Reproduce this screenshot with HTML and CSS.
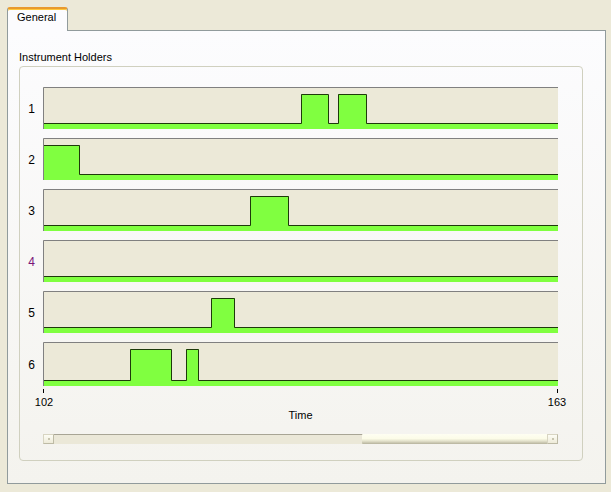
FILE: index.html
```html
<!DOCTYPE html>
<html>
<head>
<meta charset="utf-8">
<link rel="stylesheet" href="styles.css">
</head>
<body>
<div class="window">
  <div class="tabs"><div class="tab">General</div></div>
  <div class="panel">
    <div class="group-label">Instrument Holders</div>
    <div class="group">
      <div class="rows">
        <div class="row">
          <div class="row-label">1</div>
          <svg class="plot" width="515" height="42" viewBox="0 0 515 42">
            <rect class="bg" width="515" height="42"/>
            <path class="area" d="M1,36 H258 V7 H285 V36 H295 V7 H323 V36 H515 V42 H1 Z"/>
            <path class="step" d="M1,36.5 H258.5 V7.5 H285.5 V36.5 H295.5 V7.5 H323.5 V36.5 H515"/>
            <path class="frame" d="M0.5,42 V0.5 H515"/>
          </svg>
        </div>
        <div class="row">
          <div class="row-label">2</div>
          <svg class="plot" width="515" height="42" viewBox="0 0 515 42">
            <rect class="bg" width="515" height="42"/>
            <path class="area" d="M1,7 H37 V36 H515 V42 H1 Z"/>
            <path class="step" d="M1,7.5 H36.5 V36.5 H515"/>
            <path class="frame" d="M0.5,42 V0.5 H515"/>
          </svg>
        </div>
        <div class="row">
          <div class="row-label">3</div>
          <svg class="plot" width="515" height="42" viewBox="0 0 515 42">
            <rect class="bg" width="515" height="42"/>
            <path class="area" d="M1,36 H207 V7 H246 V36 H515 V42 H1 Z"/>
            <path class="step" d="M1,36.5 H207.5 V7.5 H245.5 V36.5 H515"/>
            <path class="frame" d="M0.5,42 V0.5 H515"/>
          </svg>
        </div>
        <div class="row">
          <div class="row-label purple">4</div>
          <svg class="plot" width="515" height="42" viewBox="0 0 515 42">
            <rect class="bg" width="515" height="42"/>
            <path class="area" d="M1,36 H515 V42 H1 Z"/>
            <path class="step" d="M1,36.5 H515"/>
            <path class="frame" d="M0.5,42 V0.5 H515"/>
          </svg>
        </div>
        <div class="row">
          <div class="row-label">5</div>
          <svg class="plot" width="515" height="42" viewBox="0 0 515 42">
            <rect class="bg" width="515" height="42"/>
            <path class="area" d="M1,36 H168 V7 H192 V36 H515 V42 H1 Z"/>
            <path class="step" d="M1,36.5 H168.5 V7.5 H191.5 V36.5 H515"/>
            <path class="frame" d="M0.5,42 V0.5 H515"/>
          </svg>
        </div>
        <div class="row">
          <div class="row-label">6</div>
          <svg class="plot" width="515" height="44" viewBox="0 0 515 44">
            <rect class="bg" width="515" height="44"/>
            <path class="area" d="M1,38 H87 V7 H128 V38 H143 V7 H156 V38 H515 V44 H1 Z"/>
            <path class="step" d="M1,38.5 H87.5 V7.5 H128.5 V38.5 H143.5 V7.5 H155.5 V38.5 H515"/>
            <path class="frame" d="M0.5,44 V0.5 H515"/>
          </svg>
        </div>
      </div>
      <div class="axis">
        <div class="ticks"><span class="tick"></span><span class="tick"></span></div>
        <div class="tick-labels"><span>102</span><span>163</span></div>
        <div class="axis-title">Time</div>
      </div>
      <div class="scrollbar">
        <div class="sb-btn"><span class="sb-grip"></span></div>
        <div class="sb-track">
          <div class="sb-thumb"></div>
        </div>
        <div class="sb-btn"><span class="sb-grip"></span></div>
      </div>
    </div>
  </div>
</div>
</body>
</html>
```

FILE: styles.css
```css
html, body {
  margin: 0;
  padding: 0;
}
body {
  width: 611px;
  height: 492px;
  background: #ECE9D8;
  font-family: "Liberation Sans", Arial, sans-serif;
  font-size: 11px;
  color: #000;
  overflow: hidden;
}
.window {
  box-sizing: border-box;
  height: 492px;
  padding: 7px 5px 8px 7px;
  display: flex;
  flex-direction: column;
}
.tabs {
  display: flex;
  position: relative;
  z-index: 1;
}
.tab {
  box-sizing: border-box;
  width: 61px;
  height: 24px;
  margin-bottom: -1px;
  padding: 2px 0 0 9px;
  line-height: 13px;
  background: #FCFCFE;
  border: 1px solid #919B9C;
  border-top: 2px solid #E89A2E;
  border-bottom: none;
  border-radius: 3px 3px 0 0;
  box-shadow: inset 0 1px 0 #FFC83C;
  color: #000;
}
.panel {
  flex: 1;
  border: 1px solid #919B9C;
  background: linear-gradient(#FCFCFE, #F4F3EE);
  display: flex;
  flex-direction: column;
}
.group-label {
  margin: 20px 0 0 11px;
  line-height: 13px;
}
.group {
  box-sizing: border-box;
  width: 564px;
  height: 395px;
  margin: 2px 0 0 11px;
  border: 1px solid #D0D0BF;
  border-radius: 4px;
  padding: 20px 0 0 0;
  display: flex;
  flex-direction: column;
}
.rows {
  display: flex;
  flex-direction: column;
  gap: 9px;
}
.row {
  display: flex;
  align-items: center;
}
.row-label {
  width: 23px;
  text-align: center;
  font-size: 12px;
  line-height: 14px;
  padding-top: 2px;
}
.row-label.purple {
  color: #7A1478;
}
.plot {
  display: block;
}
.plot .bg {
  fill: #ECE9D8;
}
.plot .area {
  fill: #80FF40;
}
.plot .step {
  fill: none;
  stroke: #1E3A0A;
  stroke-width: 1;
}
.plot .frame {
  fill: none;
  stroke: #808080;
  stroke-width: 1;
}
.axis {
  margin-left: 23px;
  width: 515px;
  display: flex;
  flex-direction: column;
}
.ticks {
  display: flex;
  justify-content: space-between;
  margin-top: 3px;
  height: 4px;
}
.tick {
  width: 1px;
  height: 4px;
  background: #000;
}
.tick-labels {
  display: flex;
  justify-content: space-between;
  margin: 3px -12px 0 -12px;
  line-height: 13px;
}
.tick-labels span {
  width: 26px;
  text-align: center;
}
.axis-title {
  text-align: center;
  line-height: 13px;
}
.scrollbar {
  margin: 12px 0 0 23px;
  width: 515px;
  height: 10px;
  display: flex;
}
.sb-btn {
  box-sizing: border-box;
  width: 11px;
  height: 10px;
  background: linear-gradient(#FDFDF5, #EEEBD9);
  border: 1px solid #D8D5C2;
  border-right-color: #BDBAA5;
  border-bottom-color: #BDBAA5;
  display: flex;
  align-items: center;
  justify-content: center;
}
.sb-grip {
  width: 2px;
  height: 2px;
  background: #C8C5B0;
}
.sb-track {
  flex: 1;
  background: #EBE8D8;
  border-top: 1px solid #A8A595;
  display: flex;
  box-sizing: border-box;
}
.sb-thumb {
  margin-left: auto;
  width: 185px;
  margin-top: -1px;
  height: 10px;
  background: linear-gradient(#FEFEF2 0%, #FCFCE8 45%, #E4E2CC 70%, #B5B29C 100%);
  border-radius: 1px 0 0 1px;
}
```
